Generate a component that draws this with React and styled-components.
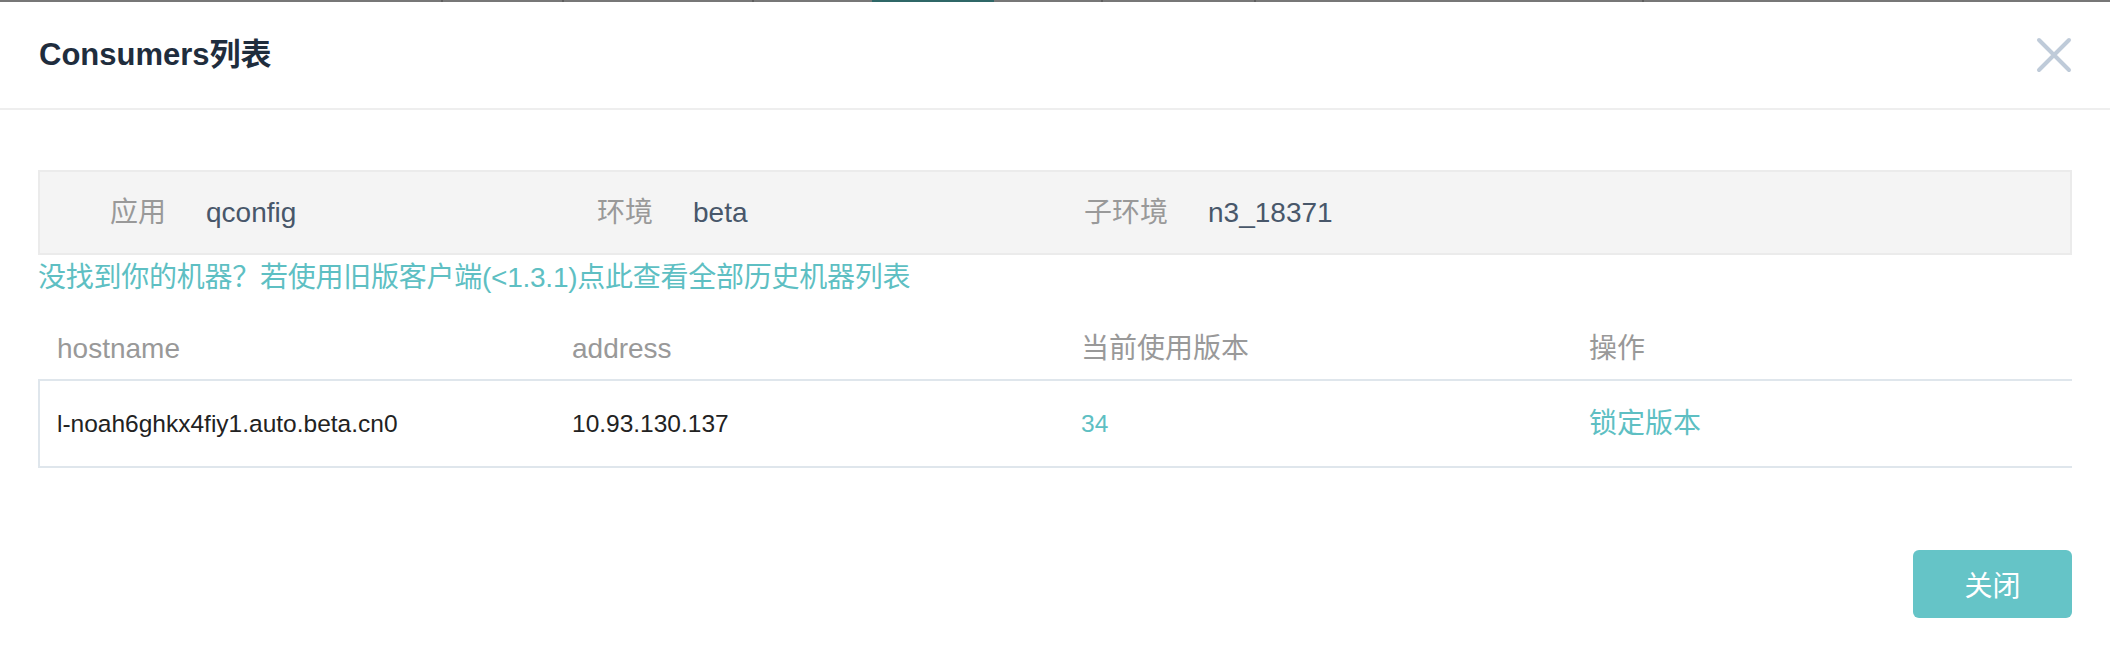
import React from "react";
import styled, { createGlobalStyle } from "styled-components";

const GlobalStyle = createGlobalStyle`
  html, body {
    margin: 0;
    padding: 0;
    background: #ffffff;
  }
  body {
    font-family: "Liberation Sans", "Noto Sans CJK SC", sans-serif;
    -webkit-font-smoothing: antialiased;
  }
  * { box-sizing: border-box; }
`;

const TEAL = "#5ebfc3";

const TopStrip = styled.div`
  display: flex;
  height: 2px;
  width: 100%;
  background: #777777;
`;

const StripSegment = styled.div`
  flex: 0 0 ${(p) => p.$w}px;
  height: 2px;
  background: ${(p) => (p.$accent ? "#2f6767" : "#777777")};
  border-left: ${(p) => (p.$sep ? "2px solid #5e5e5e" : "none")};
`;

const Dialog = styled.div`
  display: flex;
  flex-direction: column;
  width: 100%;
`;

const Header = styled.header`
  display: flex;
  align-items: center;
  justify-content: space-between;
  height: 108px;
  padding: 0 38px 0 39px;
  border-bottom: 2px solid #eeeeee;
`;

const Title = styled.h2`
  margin: 0;
  font-size: 31px;
  font-weight: 700;
  line-height: 40px;
  color: #1f2d3d;
`;

const CloseButton = styled.button`
  display: flex;
  align-items: center;
  justify-content: center;
  width: 36px;
  height: 36px;
  padding: 0;
  border: none;
  background: transparent;
  cursor: pointer;
`;

const Body = styled.section`
  padding: 60px 38px 0 38px;
`;

const InfoBox = styled.div`
  display: grid;
  grid-template-columns: repeat(4, 1fr);
  align-items: center;
  height: 85px;
  padding: 0 42px 0 40px;
  background: #f4f4f4;
  border: 2px solid #ebebeb;
`;

const InfoItem = styled.div`
  display: flex;
  align-items: center;
  gap: 40px;
  padding-left: 30px;
  font-size: 28px;
  line-height: 40px;
`;

const InfoLabel = styled.span`
  color: #999999;
`;

const InfoValue = styled.span`
  color: #48576a;
`;

const NoticeLink = styled.a`
  display: block;
  font-size: 28px;
  line-height: 46px;
  letter-spacing: -0.25px;
  color: ${TEAL};
  text-decoration: none;
  cursor: pointer;
`;

const TableGrid = styled.div`
  display: grid;
  grid-template-columns: 515px 509px 508px 1fr;
  align-items: center;
`;

const HeadRow = styled(TableGrid)`
  padding: 28px 0 10px 19px;
  font-size: 28px;
  line-height: 40px;
  color: #999999;
`;

const BodyRow = styled(TableGrid)`
  height: 89px;
  padding-left: 17px;
  border-top: 2px solid #dfe6ec;
  border-bottom: 2px solid #dfe6ec;
  border-left: 2px solid #dfe6ec;
`;

const Cell = styled.div`
  font-size: ${(p) => (p.$large ? "28px" : "24.5px")};
  line-height: 40px;
  color: ${(p) => (p.$accent ? TEAL : "#222222")};
  cursor: ${(p) => (p.$action ? "pointer" : "default")};
`;

const Footer = styled.footer`
  display: flex;
  justify-content: flex-end;
  padding: 82px 38px 28px 38px;
`;

const PrimaryButton = styled.button`
  width: 159px;
  height: 68px;
  border: none;
  border-radius: 6px;
  background: #65c4c7;
  color: #ffffff;
  font-family: "Liberation Sans", "Noto Sans CJK SC", sans-serif;
  font-size: 28px;
  cursor: pointer;
`;

const strip = [
  { w: 441 },
  { w: 121, sep: true },
  { w: 190, sep: true },
  { w: 120, sep: true },
  { w: 122, accent: true },
  { w: 107 },
  { w: 153, sep: true },
  { w: 388, sep: true },
  { w: 468, sep: true },
];

const info = [
  { label: "应用", value: "qconfig" },
  { label: "环境", value: "beta" },
  { label: "子环境", value: "n3_18371" },
];

const columns = ["hostname", "address", "当前使用版本", "操作"];

const rows = [
  {
    hostname: "l-noah6ghkx4fiy1.auto.beta.cn0",
    address: "10.93.130.137",
    version: "34",
  },
];

function CloseIcon() {
  return (
    <svg width="36" height="36" viewBox="0 0 36 36" fill="none">
      <path
        d="M3 3 L33 33 M33 3 L3 33"
        stroke="#bfcbd9"
        strokeWidth="4"
        strokeLinecap="round"
      />
    </svg>
  );
}

export default function App() {
  return (
    <>
      <GlobalStyle />
      <TopStrip>
        {strip.map((s, i) => (
          <StripSegment key={i} $w={s.w} $sep={s.sep} $accent={s.accent} />
        ))}
      </TopStrip>
      <Dialog>
        <Header>
          <Title>Consumers列表</Title>
          <CloseButton aria-label="close">
            <CloseIcon />
          </CloseButton>
        </Header>
        <Body>
          <InfoBox>
            {info.map((it) => (
              <InfoItem key={it.label}>
                <InfoLabel>{it.label}</InfoLabel>
                <InfoValue>{it.value}</InfoValue>
              </InfoItem>
            ))}
          </InfoBox>
          <NoticeLink>没找到你的机器？若使用旧版客户端(&lt;1.3.1)点此查看全部历史机器列表</NoticeLink>
          <HeadRow>
            {columns.map((c) => (
              <div key={c}>{c}</div>
            ))}
          </HeadRow>
          {rows.map((r) => (
            <BodyRow key={r.hostname}>
              <Cell>{r.hostname}</Cell>
              <Cell>{r.address}</Cell>
              <Cell $accent>{r.version}</Cell>
              <Cell $accent $large $action>
                锁定版本
              </Cell>
            </BodyRow>
          ))}
        </Body>
        <Footer>
          <PrimaryButton>关闭</PrimaryButton>
        </Footer>
      </Dialog>
    </>
  );
}
